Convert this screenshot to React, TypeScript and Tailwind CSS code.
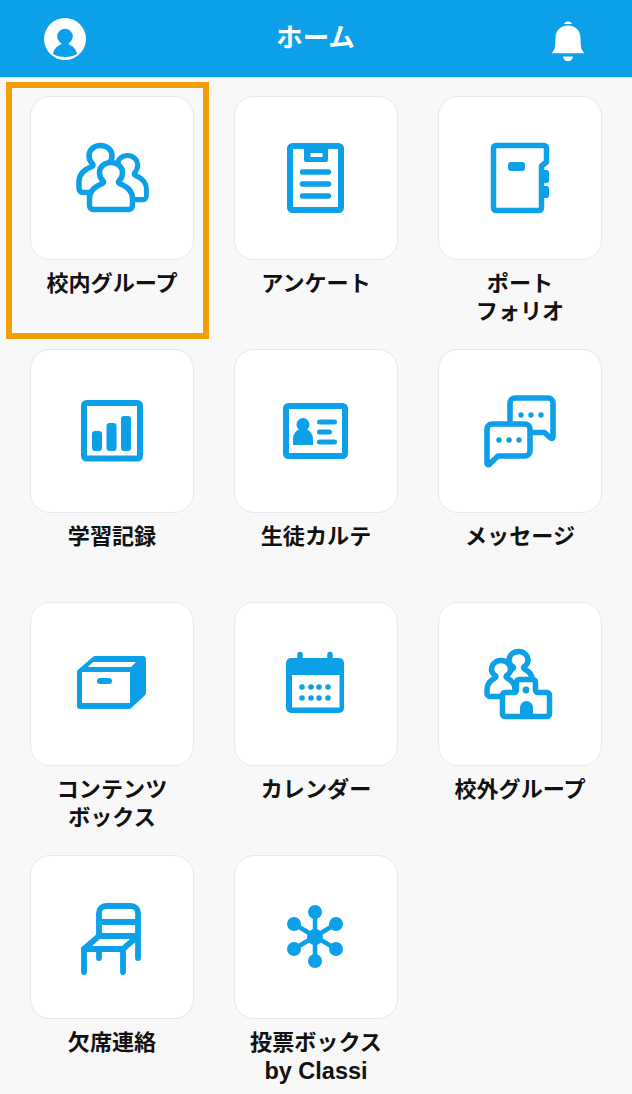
import React from "react";

const BLUE = "#0ca0e9";

function Icon({ children }: { children: React.ReactNode }) {
  return (
    <svg viewBox="0 0 164 164" className="block h-full w-full" fill="none" stroke={BLUE} strokeWidth={5} strokeLinecap="round" strokeLinejoin="round">
      {children}
    </svg>
  );
}

const person = "M-17.5 47 a4 4 0 0 1 -4 -4 v-7 c0 -7 5 -12 13 -15 c1.200 -.6 1.400 -1.600 .5 -2.600 c-2.200 -2 -3.500 -5 -3.500 -8.400 c0 -5.700 5 -10 11.500 -10 s11.500 4.300 11.500 10 c0 3.400 -1.300 6.400 -3.500 8.400 c-.9 1 -.7 2 .5 2.600 c8 3 13 8 13 15 v7 a4 4 0 0 1 -4 4 z";

const personSmall = "M-11 36 a3 3 0 0 1 -3 -3 v-4 c0 -5 3 -9 8 -11.500 c1 -.6 1.200 -1.400 .5 -2.200 c-2.500 -1.800 -4 -3.800 -4 -6.300 c0 -5 4 -9 9.500 -9 s9.500 4 9.500 9 c0 2.500 -1.500 4.500 -4 6.300 c-.7 .8 -.5 1.600 .5 2.200 c5 2.500 8 6.500 8 11.500 v4 a3 3 0 0 1 -3 3 z";

const GroupIcon = () => (
  <Icon>
    <g strokeWidth={5.5}>
      <path d={person} transform="translate(70.500 49.500)" fill="#fff" />
      <path d={person} transform="translate(97.500 59.500) scale(.88 .94)" fill="#fff" />
      <path d={person} transform="translate(81 66.500)" fill="#fff" />
    </g>
  </Icon>
);

const ClipboardIcon = () => (
  <Icon>
    <rect x="56" y="50" width="51" height="64" rx="2.500" strokeWidth={6} />
    <path d="M72 50 h20 v14 h-20 z" fill={BLUE} strokeWidth={4} />
    <path d="M76.500 59 h12" stroke="#fff" strokeWidth={4} strokeLinecap="butt" />
    <path d="M68.500 76 h26 M68.500 88 h26 M68.500 100 h26" strokeWidth={5.5} />
  </Icon>
);

const NotebookIcon = () => (
  <Icon>
    <path d="M58 49.500 H106 a2.500 2.500 0 0 1 2.500 2.500 V66 l-5 4 V112 a2.500 2.500 0 0 1 -2.500 2.500 H58 a2.500 2.500 0 0 1 -2.500 -2.500 V52 a2.500 2.500 0 0 1 2.500 -2.500 z" strokeWidth={5.5} />
    <rect x="70" y="66" width="17" height="9" rx="3" fill={BLUE} stroke="none" />
    <rect x="103" y="74" width="8" height="13" rx="2.500" fill={BLUE} stroke="none" />
    <rect x="103" y="90" width="8" height="12" rx="2.500" fill={BLUE} stroke="none" />
  </Icon>
);

const ChartIcon = () => (
  <Icon>
    <rect x="54" y="54" width="56" height="55.500" rx="2.500" strokeWidth={6} />
    <rect x="62" y="82" width="10" height="20" rx="3" fill={BLUE} stroke="none" />
    <rect x="76.500" y="74" width="10" height="28" rx="3" fill={BLUE} stroke="none" />
    <rect x="91" y="67" width="10" height="35" rx="3" fill={BLUE} stroke="none" />
  </Icon>
);

const IdIcon = () => (
  <Icon>
    <rect x="52" y="57" width="59" height="50" rx="2.500" strokeWidth={6} />
    <circle cx="69" cy="75.500" r="6.500" fill={BLUE} stroke="none" />
    <path d="M59 96 v-6 c0 -5 3.500 -9 7 -10 h6 c3.500 1 7 5 7 10 v6 z" fill={BLUE} stroke="none" />
    <path d="M85.500 73 h15 M85.500 83 h10 M85.500 93 h15" strokeWidth={5} />
  </Icon>
);

const MessageIcon = () => (
  <Icon>
    <path d="M72 71 V54 a5 5 0 0 1 5 -5 h33 a5 5 0 0 1 5 5 V88 a1.500 1.500 0 0 1 -2.500 1 L106.500 83.500 H95" strokeWidth={5.6} />
    <path d="M54 75 H87 a5 5 0 0 1 5 5 v22 a5 5 0 0 1 -5 5 H60 l-8 7.500 a1.500 1.500 0 0 1 -3 -1 V80 a5 5 0 0 1 5 -5 z" strokeWidth={5.6} fill="#fff" />
    <g fill={BLUE} stroke="none">
      <circle cx="61" cy="91" r="2.700" />
      <circle cx="71" cy="91" r="2.700" />
      <circle cx="81" cy="91" r="2.700" />
      <circle cx="83" cy="66" r="2.700" />
      <circle cx="93" cy="66" r="2.700" />
      <circle cx="103" cy="66" r="2.700" />
    </g>
  </Icon>
);

const BoxIcon = () => (
  <Icon>
    <path d="M50 70 L65 57 H113 V91 L99 104 H50 z" fill={BLUE} strokeWidth={6} />
    <path d="M63 60 H106 L101 65 H58 z" fill="#fff" stroke="none" />
    <rect x="52" y="70" width="48" height="31" fill="#fff" stroke="none" />
    <rect x="67" y="76" width="15" height="6" rx="3" fill={BLUE} stroke="none" />
  </Icon>
);

const CalendarIcon = () => (
  <Icon>
    <path d="M66 52.500 v7 M96 52.500 v7" strokeWidth={5.500} />
    <rect x="52" y="56" width="58" height="55" rx="5" fill={BLUE} stroke="none" />
    <rect x="58" y="73" width="47.500" height="32.500" fill="#fff" stroke="none" />
    <g fill={BLUE} stroke="none">
      {[68, 77, 85, 94].map((x) => (
        <React.Fragment key={x}>
          <circle cx={x} cy="85" r="2.800" />
          <circle cx={x} cy="96" r="2.800" />
        </React.Fragment>
      ))}
    </g>
  </Icon>
);

const OutsideIcon = () => (
  <Icon>
    <g strokeWidth={5.500}>
      <path d={personSmall} transform="translate(80.500 49.500)" fill="#fff" />
      <path d={personSmall} transform="translate(63 58.500)" fill="#fff" />
    </g>
    <path d="M67 90.500 h9 a2.500 2.500 0 0 0 2.500 -2.500 v-8 a2.500 2.500 0 0 1 2.500 -2.500 h14 a2.500 2.500 0 0 1 2.500 2.500 v8 a2.500 2.500 0 0 0 2.500 2.500 h9 a2.500 2.500 0 0 1 2.500 2.500 v19 a2.500 2.500 0 0 1 -2.500 2.500 h-42 a2.500 2.500 0 0 1 -2.500 -2.500 v-19 a2.500 2.500 0 0 1 2.500 -2.500 z" fill="#fff" strokeWidth={5.500} />
    <circle cx="88" cy="88" r="3.400" fill={BLUE} stroke="none" />
    <path d="M82 114 v-8.500 a6.500 6.500 0 0 1 13 0 v8.500 z" fill={BLUE} stroke="none" />
  </Icon>
);

const ChairIcon = () => (
  <Icon>
    <g strokeWidth={5.800}>
      <path d="M69 81 V58 a7 7 0 0 1 7 -7 h25 a7 7 0 0 1 7 7 V103" />
      <path d="M69 67 H108 M69 81 H108" />
      <path d="M69 81 L54 94 H93 L108 81" />
      <path d="M54 94 V117 M93 94 V117 M69 94 V103" />
    </g>
  </Icon>
);

const HubIcon = () => (
  <Icon>
    <path d="M81 57 V106 M60 69 L102 94 M102 69 L60 94" strokeWidth={4.500} />
    <g fill={BLUE} stroke="none">
      <circle cx="81" cy="82" r="8" />
      <circle cx="81" cy="57" r="7" />
      <circle cx="81" cy="106" r="7" />
      <circle cx="60" cy="69" r="7" />
      <circle cx="102" cy="69" r="7" />
      <circle cx="60" cy="94" r="7" />
      <circle cx="102" cy="94" r="7" />
    </g>
  </Icon>
);

const items: { lines: string[]; icon: React.ReactNode; marked?: boolean }[] = [
  { lines: ["校内グループ"], icon: <GroupIcon />, marked: true },
  { lines: ["アンケート"], icon: <ClipboardIcon /> },
  { lines: ["ポート", "フォリオ"], icon: <NotebookIcon /> },
  { lines: ["学習記録"], icon: <ChartIcon /> },
  { lines: ["生徒カルテ"], icon: <IdIcon /> },
  { lines: ["メッセージ"], icon: <MessageIcon /> },
  { lines: ["コンテンツ", "ボックス"], icon: <BoxIcon /> },
  { lines: ["カレンダー"], icon: <CalendarIcon /> },
  { lines: ["校外グループ"], icon: <OutsideIcon /> },
  { lines: ["欠席連絡"], icon: <ChairIcon /> },
  { lines: ["投票ボックス", "by Classi"], icon: <HubIcon /> },
];

export default function App() {
  return (
    <div className="h-[1094px] w-[632px] overflow-hidden bg-[#f8f8f8] [font-family:'Liberation_Sans','Noto_Sans_CJK_JP',sans-serif]">
      <header className="flex h-[78px] items-center justify-between border-b border-[#d5dde2] bg-[#0ca0e9] pr-[47px] pl-[44px]">
        <svg viewBox="0 0 42 42" className="h-[42px] w-[42px]">
          <circle cx="21" cy="21" r="21" fill="#fff" />
          <circle cx="21" cy="18.500" r="7.800" fill={BLUE} />
          <path d="M9 36 c1 -5 4 -8 8 -9.500 l1 -3 h6 l1 3 c4 1.500 7 4.500 8 9.500 c-3 2 -7 3 -12 3 s-9 -1 -12 -3 z" fill={BLUE} />
        </svg>
        <h1 className="mr-[6px] text-[26.5px] leading-none font-bold text-white">ホーム</h1>
        <svg viewBox="0 0 34 46" className="h-[46px] w-[34px]">
          <g fill="#fff">
            <path d="M13 8 c1 -3.400 7 -3.400 8 0 z" />
            <path d="M17 9.500 c-8 0 -12.500 5.500 -12.500 13 c0 6 -.5 9.500 -1.500 11.500 l-2.300 3.200 h32.600 l-2.300 -3.200 c-1 -2 -1.500 -5.500 -1.500 -11.500 c0 -7.500 -4.500 -13 -12.500 -13 z" />
            <path d="M12 40.500 h10 c-.5 3 -2.300 4.700 -5 4.700 s-4.500 -1.700 -5 -4.700 z" />
          </g>
        </svg>
      </header>
      <main className="grid grid-cols-[164px_164px_164px] gap-x-10 pt-[18px] pl-[30px]">
        {items.map((item) => (
          <div key={item.lines[0]} className="relative h-[253px]">
            {item.marked && (
              <div className="absolute top-[-14px] left-[-24px] h-[257px] w-[203px] border-[6px] border-[#f29f05]" />
            )}
            <div className="h-[164px] w-[164px] rounded-[20px] border border-[#e8e8e8] bg-white">
              <div className="-m-px h-[164px] w-[164px]">{item.icon}</div>
            </div>
            <div className="mt-[10px] text-center text-[22.1px] leading-[28px] font-bold text-[#111]">
              {item.lines.map((line) => (
                <div key={line} className={line === "by Classi" ? "whitespace-nowrap text-[23.5px]" : "whitespace-nowrap"}>{line}</div>
              ))}
            </div>
          </div>
        ))}
      </main>
    </div>
  );
}
